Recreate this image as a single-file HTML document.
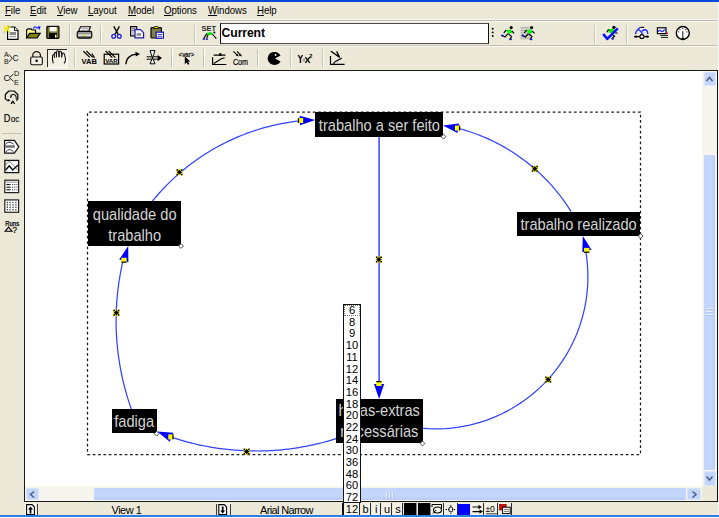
<!DOCTYPE html>
<html><head><meta charset="utf-8">
<style>
*{margin:0;padding:0;box-sizing:border-box}
html,body{width:719px;height:518px;overflow:hidden;background:#ECE9D8;font-family:"Liberation Sans",sans-serif;position:relative}
.a{position:absolute}
.menu{position:absolute;top:4px;font-size:11px;color:#000;white-space:nowrap;letter-spacing:-0.1px;line-height:13px;transform:scaleX(0.88);transform-origin:0 0}
.menu u{text-decoration:underline}
.sep{position:absolute;background:#C5C2B2;border-right:1px solid #fff;width:2px}
svg{position:absolute;overflow:visible}
.st{position:absolute;font-size:10.5px;color:#000;white-space:nowrap;letter-spacing:-0.2px}
.nb{position:absolute;background:#000}
.nt{position:absolute;color:#D4D4D4;white-space:nowrap;text-align:center}
.nt span{display:inline-block;transform-origin:center}
.fl{position:absolute;text-align:center;color:#000}
</style></head><body>

<div class="a" style="left:0;top:0;width:719px;height:2px;background:#0A49D6"></div>
<div class="menu" style="left:5px"><u>F</u>ile</div>
<div class="menu" style="left:30px"><u>E</u>dit</div>
<div class="menu" style="left:57px"><u>V</u>iew</div>
<div class="menu" style="left:87.5px"><u>L</u>ayout</div>
<div class="menu" style="left:127.5px"><u>M</u>odel</div>
<div class="menu" style="left:163.5px"><u>O</u>ptions</div>
<div class="menu" style="left:208px"><u>W</u>indows</div>
<div class="menu" style="left:257px"><u>H</u>elp</div>
<div class="a" style="left:0;top:19px;width:719px;height:1px;background:#F7F6F0"></div>
<div class="a" style="left:0;top:20px;width:719px;height:1px;background:#BDBAAC"></div>
<div class="a" style="left:0;top:21px;width:719px;height:1px;background:#F8F7F2"></div>
<div class="a" style="left:0;top:45px;width:719px;height:1px;background:#C5C2B2"></div>
<div class="a" style="left:0;top:46px;width:719px;height:1px;background:#F8F7F2"></div>
<div class="a" style="left:718px;top:2px;width:1px;height:515px;background:#F6F6F2"></div>
<div class="sep" style="left:69px;top:25px;height:18px"></div>
<div class="sep" style="left:100px;top:25px;height:18px"></div>
<div class="sep" style="left:194px;top:25px;height:18px"></div>
<div class="sep" style="left:594px;top:25px;height:18px"></div>
<div class="sep" style="left:626px;top:25px;height:18px"></div>
<div class="sep" style="left:74px;top:49px;height:18px"></div>
<div class="sep" style="left:171px;top:49px;height:18px"></div>
<div class="sep" style="left:203px;top:49px;height:18px"></div>
<div class="sep" style="left:257px;top:49px;height:18px"></div>
<div class="sep" style="left:290px;top:49px;height:18px"></div>
<div class="sep" style="left:322px;top:49px;height:18px"></div>
<div class="a" style="left:219.5px;top:22.8px;width:269.5px;height:21px;background:#fff;border:1.8px solid #4a4a4a;border-right:1.2px solid #111;border-left:1.2px solid #111"></div>
<div class="a" style="left:221.6px;top:25.6px;font-size:12.2px;font-weight:bold;color:#000;line-height:15px;letter-spacing:-0.1px">Current</div>
<div class="a" style="left:47.2px;top:48.8px;width:20.2px;height:18.6px;border-top:1.3px solid #2a2a2a;border-left:1.4px solid #2a2a2a;background:#F3F1E6;box-shadow:1px 1px 0 #fff"></div>
<div class="a" style="left:2px;top:132.5px;width:20px;height:1px;background:#C5C2B2"></div>
<div class="a" style="left:23.7px;top:69.8px;width:694.3px;height:432.5px;border:1.3px solid #1a1a1a;border-bottom:1.5px solid #1a1a1a;border-right:1.2px solid #111;background:#fff"></div>
<div class="a" style="left:702px;top:71px;width:15px;height:416px;background:#F7F6EE"></div>
<div class="a" style="left:703.5px;top:72px;width:12px;height:14px;background:#C4D5FC;border-radius:2px;box-shadow:inset 0 0 0 1px #D8E4FD"></div>
<div class="a" style="left:704px;top:155px;width:11px;height:315px;background:linear-gradient(90deg,#C3D4FC 0%,#C6D7FC 70%,#B8CBF8 100%);border-radius:1.5px"></div>
<div class="a" style="left:703.5px;top:471px;width:12px;height:15px;background:#C4D5FC;border-radius:2px;box-shadow:inset 0 0 0 1px #D8E4FD"></div>
<div class="a" style="left:25px;top:486px;width:677px;height:15px;background:#F7F6EE"></div>
<div class="a" style="left:26px;top:488px;width:13px;height:12px;background:#C4D5FC;border-radius:2px;box-shadow:inset 0 0 0 1px #D8E4FD"></div>
<div class="a" style="left:94px;top:488px;width:591.5px;height:11.5px;background:linear-gradient(180deg,#C3D4FC 0%,#C6D7FC 65%,#B8CBF8 100%);border-radius:1.5px"></div>
<div class="a" style="left:687px;top:488px;width:14px;height:12px;background:#C4D5FC;border-radius:2px;box-shadow:inset 0 0 0 1px #D8E4FD"></div>
<div class="a" style="left:702px;top:486px;width:15px;height:15px;background:#ECE9D8"></div>
<svg class="a" style="left:0;top:0" width="719" height="518"><path d="M706.5,81 L709.5,77.5 L712.5,81" fill="none" stroke="#4D6185" stroke-width="1.6"/><path d="M706.5,476.5 L709.5,480 L712.5,476.5" fill="none" stroke="#4D6185" stroke-width="1.6"/><path d="M34,491.5 L30.5,494.5 L34,497.5" fill="none" stroke="#4D6185" stroke-width="1.6"/><path d="M692.5,491.5 L696,494.5 L692.5,497.5" fill="none" stroke="#4D6185" stroke-width="1.6"/><path d="M386.5,491 L386.5,498 M389.5,491 L389.5,498 M392.5,491 L392.5,498" stroke="#E8EEFE" stroke-width="1"/><path d="M387.5,491.5 L387.5,498.5 M390.5,491.5 L390.5,498.5 M393.5,491.5 L393.5,498.5" stroke="#A9BEF2" stroke-width="0.8"/><path d="M706,308.5 L713,308.5 M706,311.5 L713,311.5 M706,314.5 L713,314.5" stroke="#E8EEFE" stroke-width="1"/><path d="M706.5,309.5 L713.5,309.5 M706.5,312.5 L713.5,312.5 M706.5,315.5 L713.5,315.5" stroke="#A9BEF2" stroke-width="0.8"/></svg>
<svg class="a" style="left:0;top:0" width="719" height="518"><rect x="87.5" y="112" width="553" height="342.5" fill="none" stroke="#1e1e1e" stroke-width="1.25" stroke-dasharray="2.75 2.58" stroke-dashoffset="3.9"/><path d="M152.31,201.24 L154.60,198.46 L156.94,195.72 L159.32,193.01 L161.75,190.34 L164.21,187.72 L166.73,185.13 L169.28,182.58 L171.88,180.08 L174.51,177.62 L177.19,175.20 L179.90,172.83 L182.65,170.50 L185.45,168.22 L188.27,165.99 L191.14,163.80 L194.04,161.65 L196.97,159.56 L199.94,157.51 L202.94,155.51 L205.98,153.57 L209.04,151.67 L212.14,149.82 L215.26,148.02 L218.42,146.28 L221.60,144.58 L224.81,142.94 L228.05,141.35 L231.31,139.82 L234.60,138.34 L237.91,136.91 L241.24,135.53 L244.59,134.22 L247.97,132.95 L251.37,131.74 L254.78,130.59 L258.22,129.49 L261.67,128.45 L265.14,127.47 L268.62,126.54 L272.12,125.67 L275.64,124.86 L279.16,124.11 L282.70,123.41 L286.25,122.77 L289.81,122.19 L293.37,121.67 L296.95,121.21 L300.53,120.80" fill="none" stroke="#3344ff" stroke-width="1.25"/><polygon points="315.30,120.00 299.99,125.37 299.63,115.78" fill="#0000ff"/><rect x="297.86" y="118.05" width="5.3" height="5" fill="#ffff00"/><rect x="297.86" y="118.05" width="1.3" height="5" fill="#111"/><g transform="translate(179.5,172.3)"><rect x="-3" y="-3" width="6" height="6" fill="#e8e000"/><rect x="-1.8" y="-1.8" width="3.6" height="3.6" fill="#000" transform="rotate(45)"/><rect x="-3" y="-3" width="1.5" height="1.5" fill="#000"/><rect x="1.5" y="-3" width="1.5" height="1.5" fill="#000"/><rect x="-3" y="1.5" width="1.5" height="1.5" fill="#000"/><rect x="1.5" y="1.5" width="1.5" height="1.5" fill="#000"/></g><path d="M571.14,211.62 L569.53,209.08 L567.89,206.56 L566.20,204.07 L564.48,201.60 L562.71,199.16 L560.91,196.75 L559.07,194.37 L557.19,192.02 L555.27,189.70 L553.32,187.41 L551.33,185.15 L549.31,182.93 L547.24,180.73 L545.15,178.57 L543.02,176.44 L540.86,174.35 L538.66,172.29 L536.44,170.27 L534.18,168.28 L531.88,166.33 L529.56,164.42 L527.21,162.54 L524.83,160.70 L522.42,158.90 L519.98,157.14 L517.51,155.41 L515.02,153.73 L512.50,152.08 L509.95,150.48 L507.38,148.92 L504.78,147.40 L502.16,145.91 L499.52,144.48 L496.85,143.08 L494.16,141.73 L491.45,140.42 L488.73,139.15 L485.98,137.92 L483.21,136.74 L480.42,135.61 L477.62,134.52 L474.79,133.47 L471.96,132.47 L469.10,131.51 L466.23,130.60 L463.35,129.74 L460.45,128.92 L457.55,128.15" fill="none" stroke="#3344ff" stroke-width="1.25"/><polygon points="443.00,125.50 459.10,123.44 457.44,132.90" fill="#0000ff"/><rect x="454.93" y="125.55" width="5.3" height="5" fill="#ffff00"/><rect x="458.93" y="125.55" width="1.3" height="5" fill="#111"/><g transform="translate(534.8,168.8)"><rect x="-3" y="-3" width="6" height="6" fill="#e8e000"/><rect x="-1.8" y="-1.8" width="3.6" height="3.6" fill="#000" transform="rotate(45)"/><rect x="-3" y="-3" width="1.5" height="1.5" fill="#000"/><rect x="1.5" y="-3" width="1.5" height="1.5" fill="#000"/><rect x="-3" y="1.5" width="1.5" height="1.5" fill="#000"/><rect x="1.5" y="1.5" width="1.5" height="1.5" fill="#000"/></g><path d="M422.46,428.32 L428.25,428.72 L434.05,428.89 L439.85,428.84 L445.65,428.57 L451.43,428.09 L457.19,427.38 L462.91,426.45 L468.60,425.30 L474.24,423.94 L479.82,422.36 L485.34,420.58 L490.79,418.58 L496.16,416.38 L501.44,413.97 L506.62,411.36 L511.71,408.56 L516.68,405.57 L521.53,402.39 L526.26,399.03 L530.85,395.49 L535.31,391.77 L539.63,387.89 L543.79,383.85 L547.79,379.65 L551.64,375.31 L555.31,370.82 L558.81,366.19 L562.13,361.43 L565.27,356.55 L568.22,351.55 L570.98,346.45 L573.54,341.24 L575.90,335.94 L578.05,330.56 L580.00,325.09 L581.74,319.56 L583.27,313.96 L584.58,308.31 L585.68,302.61 L586.56,296.87 L587.22,291.11 L587.66,285.32 L587.87,279.53 L587.87,273.72 L587.65,267.93 L587.20,262.14 L586.54,256.38 L585.65,250.64" fill="none" stroke="#3344ff" stroke-width="1.25"/><polygon points="582.80,236.10 591.55,249.76 582.30,252.32" fill="#0000ff"/><rect x="584.09" y="247.87" width="5.3" height="5" fill="#ffff00"/><rect x="584.09" y="251.57" width="5.3" height="1.3" fill="#111"/><g transform="translate(548.2,379.6)"><rect x="-3" y="-3" width="6" height="6" fill="#e8e000"/><rect x="-1.8" y="-1.8" width="3.6" height="3.6" fill="#000" transform="rotate(45)"/><rect x="-3" y="-3" width="1.5" height="1.5" fill="#000"/><rect x="1.5" y="-3" width="1.5" height="1.5" fill="#000"/><rect x="-3" y="1.5" width="1.5" height="1.5" fill="#000"/><rect x="1.5" y="1.5" width="1.5" height="1.5" fill="#000"/></g><path d="M336.31,438.62 L332.96,439.66 L329.60,440.65 L326.23,441.59 L322.84,442.49 L319.44,443.35 L316.03,444.16 L312.62,444.93 L309.19,445.65 L305.75,446.33 L302.30,446.96 L298.85,447.54 L295.38,448.08 L291.91,448.58 L288.44,449.03 L284.96,449.43 L281.47,449.79 L277.98,450.10 L274.49,450.36 L270.99,450.58 L267.49,450.76 L263.99,450.88 L260.48,450.96 L256.98,451.00 L253.47,450.99 L249.97,450.93 L246.47,450.83 L242.97,450.68 L239.47,450.48 L235.97,450.24 L232.48,449.95 L228.99,449.62 L225.51,449.24 L222.03,448.81 L218.56,448.34 L215.09,447.82 L211.63,447.26 L208.18,446.65 L204.74,446.00 L201.30,445.30 L197.88,444.55 L194.46,443.76 L191.06,442.93 L187.67,442.05 L184.29,441.13 L180.92,440.16 L177.56,439.15 L174.22,438.09 L170.90,436.99" fill="none" stroke="#3344ff" stroke-width="1.25"/><polygon points="157.20,431.40 173.37,432.72 169.80,441.63" fill="#0000ff"/><rect x="168.29" y="434.41" width="5.3" height="5" fill="#ffff00"/><rect x="172.29" y="434.41" width="1.3" height="5" fill="#111"/><g transform="translate(246.6,451.6)"><rect x="-3" y="-3" width="6" height="6" fill="#e8e000"/><rect x="-1.8" y="-1.8" width="3.6" height="3.6" fill="#000" transform="rotate(45)"/><rect x="-3" y="-3" width="1.5" height="1.5" fill="#000"/><rect x="1.5" y="-3" width="1.5" height="1.5" fill="#000"/><rect x="-3" y="1.5" width="1.5" height="1.5" fill="#000"/><rect x="1.5" y="1.5" width="1.5" height="1.5" fill="#000"/></g><path d="M131.34,409.06 L130.30,406.08 L129.30,403.09 L128.33,400.09 L127.40,397.08 L126.50,394.06 L125.64,391.03 L124.82,387.98 L124.03,384.93 L123.28,381.87 L122.57,378.80 L121.89,375.72 L121.25,372.63 L120.65,369.54 L120.09,366.44 L119.56,363.33 L119.07,360.22 L118.61,357.10 L118.20,353.97 L117.82,350.84 L117.48,347.71 L117.18,344.57 L116.91,341.43 L116.68,338.29 L116.49,335.14 L116.34,331.99 L116.22,328.84 L116.15,325.69 L116.11,322.54 L116.10,319.39 L116.14,316.23 L116.21,313.08 L116.32,309.93 L116.47,306.78 L116.66,303.64 L116.88,300.49 L117.15,297.35 L117.45,294.21 L117.78,291.08 L118.16,287.95 L118.57,284.83 L119.02,281.71 L119.51,278.59 L120.03,275.48 L120.59,272.38 L121.19,269.29 L121.83,266.20 L122.50,263.12 L123.21,260.05" fill="none" stroke="#3344ff" stroke-width="1.25"/><polygon points="128.20,246.10 128.38,262.33 119.18,259.59" fill="#0000ff"/><rect x="121.33" y="257.79" width="5.3" height="5" fill="#ffff00"/><rect x="121.33" y="261.49" width="5.3" height="1.3" fill="#111"/><g transform="translate(116.4,312.7)"><rect x="-3" y="-3" width="6" height="6" fill="#e8e000"/><rect x="-1.8" y="-1.8" width="3.6" height="3.6" fill="#000" transform="rotate(45)"/><rect x="-3" y="-3" width="1.5" height="1.5" fill="#000"/><rect x="1.5" y="-3" width="1.5" height="1.5" fill="#000"/><rect x="-3" y="1.5" width="1.5" height="1.5" fill="#000"/><rect x="1.5" y="1.5" width="1.5" height="1.5" fill="#000"/></g><path d="M379.1,136.5 L379.1,384" fill="none" stroke="#3344ff" stroke-width="1.5"/><polygon points="379.1,399 374,384 384.2,384" fill="#0000ff"/><rect x="376.25" y="381.00" width="5.3" height="5" fill="#ffff00"/><rect x="376.25" y="381.00" width="5.3" height="1.3" fill="#111"/><g transform="translate(378.9,259.5)"><rect x="-3" y="-3" width="6" height="6" fill="#e8e000"/><rect x="-1.8" y="-1.8" width="3.6" height="3.6" fill="#000" transform="rotate(45)"/><rect x="-3" y="-3" width="1.5" height="1.5" fill="#000"/><rect x="1.5" y="-3" width="1.5" height="1.5" fill="#000"/><rect x="-3" y="1.5" width="1.5" height="1.5" fill="#000"/><rect x="1.5" y="1.5" width="1.5" height="1.5" fill="#000"/></g></svg>
<div class="nb" style="left:315px;top:112px;width:128px;height:24.5px"></div>
<div class="nt" style="left:229.00px;top:115.56px;width:300px;font-size:17px;line-height:20.7px"><span style="transform:scaleX(0.86)">trabalho a ser feito</span></div>
<div class="nb" style="left:87.5px;top:201px;width:93.8px;height:44.6px"></div>
<div class="nt" style="left:-15.60px;top:204.56px;width:300px;font-size:17px;line-height:20.7px"><span style="transform:scaleX(0.86)">qualidade do</span></div>
<div class="nt" style="left:-15.60px;top:225.66px;width:300px;font-size:17px;line-height:20.7px"><span style="transform:scaleX(0.86)">trabalho</span></div>
<div class="nb" style="left:517px;top:212.3px;width:123.3px;height:23.5px"></div>
<div class="nt" style="left:428.65px;top:214.56px;width:300px;font-size:17px;line-height:20.7px"><span style="transform:scaleX(0.86)">trabalho realizado</span></div>
<div class="nb" style="left:336px;top:398.7px;width:86.8px;height:44.4px"></div>
<div class="nt" style="left:229.40px;top:401.06px;width:300px;font-size:17px;line-height:20.7px"><span style="transform:scaleX(0.86)">horas-extras</span></div>
<div class="nt" style="left:229.40px;top:421.96px;width:300px;font-size:17px;line-height:20.7px"><span style="transform:scaleX(0.86)">necessárias</span></div>
<div class="nb" style="left:112.2px;top:409.3px;width:44.6px;height:24.2px"></div>
<div class="nt" style="left:-15.50px;top:412.16px;width:300px;font-size:17px;line-height:20.7px"><span style="transform:scaleX(0.86)">fadiga</span></div>
<svg class="a" style="left:0;top:0" width="719" height="518"><rect x="-1.7" y="-1.7" width="3.4" height="3.4" transform="translate(443.5,136.7) rotate(45)" fill="#fff" stroke="#444" stroke-width="0.9"/><rect x="-1.7" y="-1.7" width="3.4" height="3.4" transform="translate(181,246) rotate(45)" fill="#fff" stroke="#444" stroke-width="0.9"/><rect x="-1.7" y="-1.7" width="3.4" height="3.4" transform="translate(640.7,236) rotate(45)" fill="#fff" stroke="#444" stroke-width="0.9"/><rect x="-1.7" y="-1.7" width="3.4" height="3.4" transform="translate(422.5,443.5) rotate(45)" fill="#fff" stroke="#444" stroke-width="0.9"/><rect x="-1.7" y="-1.7" width="3.4" height="3.4" transform="translate(156.7,433.7) rotate(45)" fill="#fff" stroke="#444" stroke-width="0.9"/></svg>
<div class="a" style="left:343px;top:303.5px;width:18px;height:199px;background:#fff;border:1px solid #111;border-bottom:1.5px solid #111"></div>
<div class="fl" style="left:344px;top:304.10px;width:16px;font-size:11.2px;line-height:12px">6</div>
<div class="fl" style="left:344px;top:315.78px;width:16px;font-size:11.2px;line-height:12px">8</div>
<div class="fl" style="left:344px;top:327.46px;width:16px;font-size:11.2px;line-height:12px">9</div>
<div class="fl" style="left:344px;top:339.14px;width:16px;font-size:11.2px;line-height:12px">10</div>
<div class="fl" style="left:344px;top:350.82px;width:16px;font-size:11.2px;line-height:12px">11</div>
<div class="fl" style="left:344px;top:362.50px;width:16px;font-size:11.2px;line-height:12px">12</div>
<div class="fl" style="left:344px;top:374.18px;width:16px;font-size:11.2px;line-height:12px">14</div>
<div class="fl" style="left:344px;top:385.86px;width:16px;font-size:11.2px;line-height:12px">16</div>
<div class="fl" style="left:344px;top:397.54px;width:16px;font-size:11.2px;line-height:12px">18</div>
<div class="fl" style="left:344px;top:409.22px;width:16px;font-size:11.2px;line-height:12px">20</div>
<div class="fl" style="left:344px;top:420.90px;width:16px;font-size:11.2px;line-height:12px">22</div>
<div class="fl" style="left:344px;top:432.58px;width:16px;font-size:11.2px;line-height:12px">24</div>
<div class="fl" style="left:344px;top:444.26px;width:16px;font-size:11.2px;line-height:12px">30</div>
<div class="fl" style="left:344px;top:455.94px;width:16px;font-size:11.2px;line-height:12px">36</div>
<div class="fl" style="left:344px;top:467.62px;width:16px;font-size:11.2px;line-height:12px">48</div>
<div class="fl" style="left:344px;top:479.30px;width:16px;font-size:11.2px;line-height:12px">60</div>
<div class="fl" style="left:344px;top:490.98px;width:16px;font-size:11.2px;line-height:12px">72</div>
<div class="a" style="left:344.2px;top:304.8px;width:15.6px;height:10.8px;border:1px dotted #777"></div>
<svg class="a" style="left:0;top:0" width="719" height="518"><path d="M7.6,27 L14.6,27 L18,30.4 L18,39.4 L7.6,39.4 Z" fill="#fff" stroke="#000" stroke-width="1.2"/><path d="M14.4,27 L14.4,30.6 L18,30.6" fill="#e0e0e0" stroke="#000" stroke-width="0.9"/><rect x="9.6" y="32" width="6.4" height="3.2" fill="#8a8a8a"/><rect x="9.6" y="36.2" width="6.4" height="1" fill="#8a8a8a"/><path d="M4,26.5 L10,32.5 M10.5,26 L4.5,32 M7.3,25 L7.3,29.5 M3.5,29 L8,29" stroke="#f0f000" stroke-width="1.2"/><rect x="4" y="31.5" width="1.2" height="1.2" fill="#aaa"/><path d="M26.6,38 L26.6,30 L28,28.8 L31,28.8 L32,30 L35.5,30 L35.5,33.5" fill="#ffff80" stroke="#000" stroke-width="1.2"/><path d="M26.6,38 L29.6,33.4 L40.2,33.4 L37,38 Z" fill="#808000" stroke="#000" stroke-width="1.2"/><path d="M33.2,28.6 Q34.6,26 36.2,27.4 Q37.4,28.4 38.6,27.4" fill="none" stroke="#2030ff" stroke-width="1.3"/><path d="M37.6,26.2 L40.6,26.6 L39.6,30 Z" fill="#0010ff"/><rect x="46.8" y="26.3" width="12.2" height="12.2" rx="0.5" fill="#111" stroke="#000" stroke-width="1"/><rect x="47.6" y="27.2" width="1.3" height="10.6" fill="#8a8a00"/><rect x="57" y="27.2" width="1.3" height="10.6" fill="#8a8a00"/><rect x="49.4" y="27" width="7.4" height="4.6" fill="#fff"/><rect x="49.4" y="31.6" width="7.4" height="1" fill="#bdbd60"/><rect x="49.6" y="34" width="7" height="4.3" fill="#000"/><rect x="55" y="34.8" width="1.5" height="2.8" fill="#fff"/><path d="M80.5,26.8 L90.5,26.8 L88.5,31.6 L78.5,31.6 Z" fill="#fff" stroke="#000" stroke-width="1.1"/><path d="M81.3,28.6 L88.8,28.6 M80.6,30.2 L88.2,30.2" stroke="#777" stroke-width="0.6"/><rect x="77.2" y="31.4" width="14.6" height="6.8" rx="1.6" fill="#9a9a9a" stroke="#000" stroke-width="1.1"/><rect x="78.2" y="34.6" width="12.6" height="1.2" fill="#fff"/><rect x="83.6" y="34.6" width="2.6" height="1.2" fill="#e0e000"/><rect x="78.2" y="36.6" width="12.6" height="1.5" fill="#3a3a3a"/><path d="M113.8,26.4 L118.2,34.4 M119.4,26.4 L115,34.4" stroke="#000" stroke-width="1.3"/><ellipse cx="113.7" cy="36.3" rx="1.9" ry="1.9" fill="none" stroke="#1a1ad0" stroke-width="1.3"/><ellipse cx="119.3" cy="36.3" rx="1.9" ry="1.9" fill="none" stroke="#1a1ad0" stroke-width="1.3"/><rect x="130.6" y="26.6" width="6.2" height="9.4" fill="#c8c8c8" stroke="#000" stroke-width="1.1"/><path d="M132,28.5 L135,28.5 M132,30.5 L135,30.5" stroke="#555" stroke-width="0.7"/><path d="M135,29.6 L140.5,29.6 L143.6,32.7 L143.6,37.8 L135,37.8 Z" fill="#fff" stroke="#1a1ab0" stroke-width="1.2"/><rect x="136.6" y="33" width="4.5" height="3.2" fill="#9a9a9a"/><rect x="151" y="27.6" width="10.4" height="10.4" rx="0.8" fill="#808048" stroke="#000" stroke-width="1.2"/><path d="M153.6,28.6 L154.6,26.5 L157.8,26.5 L158.8,28.6 Z" fill="#e8e800" stroke="#000" stroke-width="0.8"/><rect x="156.2" y="32.2" width="7.2" height="6" fill="#fff" stroke="#1a1ab0" stroke-width="1.2"/><path d="M157.6,34.5 L162,34.5 M157.6,36.3 L162,36.3" stroke="#1a1ab0" stroke-width="0.8"/><text x="201.5" y="31.2" font-family="Liberation Sans" font-size="6.6" font-weight="bold" fill="#2a2a2a" textLength="14.6" lengthAdjust="spacingAndGlyphs">SET</text><path d="M206.5,33 L211.5,32 L213,34.4 L208,35.2 Z" fill="#00e000"/><circle cx="214.4" cy="32.4" r="1" fill="#000"/><path d="M207,33.6 L204.6,36.8 L203.8,39 M208,35 L206.5,38.5 M212.3,34 L216.3,38.7" stroke="#000" stroke-width="1.1" fill="none"/><rect x="202.6" y="38.4" width="2.4" height="1.3" fill="#1010c0"/><rect x="205.8" y="38.6" width="2.3" height="1.2" fill="#1010c0"/><circle cx="492.7" cy="28.8" r="0.95" fill="#000"/><circle cx="492.7" cy="32.4" r="0.95" fill="#000"/><circle cx="492.7" cy="36" r="0.95" fill="#000"/><g transform="translate(0,0)"><path d="M506.2,30 L510.8,29.4 L512.6,32.6 L508.3,33.8 Z" fill="#00ff00"/><circle cx="511.2" cy="27.6" r="1.6" fill="#000"/><path d="M506.3,30 L503.8,32.8 M511.8,31 L514.2,33.4 M508,33.6 L505,37 L502.6,35.8 M508.6,33.8 L511.6,36.6 L509.8,39.4" stroke="#000" stroke-width="1.15" fill="none"/><ellipse cx="502.3" cy="35.5" rx="1.3" ry="0.9" fill="#1010c0"/><ellipse cx="510.6" cy="39.4" rx="1.4" ry="0.8" fill="#1010c0"/></g><rect x="520.5" y="26.80" width="9" height="0.9" fill="#a8a8a8"/><rect x="520.5" y="28.45" width="11" height="0.9" fill="#a8a8a8"/><rect x="520.5" y="30.10" width="11" height="0.9" fill="#a8a8a8"/><rect x="520.5" y="31.75" width="11" height="0.9" fill="#a8a8a8"/><rect x="520.5" y="33.40" width="11" height="0.9" fill="#a8a8a8"/><rect x="520.5" y="35.05" width="11" height="0.9" fill="#a8a8a8"/><rect x="520.5" y="36.70" width="11" height="0.9" fill="#a8a8a8"/><rect x="520.5" y="38.35" width="9" height="0.9" fill="#a8a8a8"/><g transform="translate(20.4,0)"><path d="M506.2,30 L510.8,29.4 L512.6,32.6 L508.3,33.8 Z" fill="#00ff00"/><circle cx="511.2" cy="27.6" r="1.6" fill="#000"/><path d="M506.3,30 L503.8,32.8 M511.8,31 L514.2,33.4 M508,33.6 L505,37 L502.6,35.8 M508.6,33.8 L511.6,36.6 L509.8,39.4" stroke="#000" stroke-width="1.15" fill="none"/><ellipse cx="502.3" cy="35.5" rx="1.3" ry="0.9" fill="#1010c0"/><ellipse cx="510.6" cy="39.4" rx="1.4" ry="0.8" fill="#1010c0"/></g><path d="M608.6,29 L614.2,28.8 L613.6,32.8 L608.8,32.8 Z" fill="#00e000"/><circle cx="613.9" cy="27.3" r="1.6" fill="#000"/><path d="M608.6,29.4 L606.8,32.2 M611.8,34 L614.6,36.2 L611.8,38.6 M615.3,33 L617.4,33" stroke="#000" stroke-width="1.2" fill="none"/><path d="M615.3,33 L617.4,33" stroke="#555" stroke-width="1"/><ellipse cx="612.7" cy="38.8" rx="1.3" ry="0.9" fill="#1010c0"/><path d="M603.2,34 L607.3,38.8 L617.8,28.4" fill="none" stroke="#0010ff" stroke-width="2.6" stroke-linejoin="round"/><path d="M635.6,34.2 C635.2,32 637.5,29.6 640.4,27.3 M638.3,29.9 C640,30.2 641.6,32 642.4,34 M642,31.4 C643.2,29.6 645.6,29.2 646.8,30.6 C647.8,31.6 647.8,33 647.6,34" fill="none" stroke="#1a2aff" stroke-width="1.4"/><path d="M640.4,27.3 L644.2,27.3" stroke="#000" stroke-width="1.1"/><path d="M634,36.6 L639.4,36.6 M644.2,36.6 L649,36.6" stroke="#000" stroke-width="1.2"/><path d="M639.6,36.6 L640.6,34.9 L643.2,34.9 L644.2,36.6 L643.2,38.4 L640.6,38.4 Z" fill="#fff" stroke="#000" stroke-width="1.2"/><path d="M635.6,35 L637.8,36.6 L635.6,38.2 Z M646.6,35 L649,36.6 L646.6,38.2 Z" fill="#000"/><rect x="657.4" y="27.8" width="8.6" height="5.8" fill="#fff" stroke="#000" stroke-width="1.2"/><path d="M658.2,31.8 Q659.5,29.4 661,31 Q662.5,32.4 664,30.2 L665.4,29.8" fill="none" stroke="#1a2aff" stroke-width="1.3"/><circle cx="667" cy="33.2" r="0.9" fill="#e00000"/><path d="M660.2,35.4 L668,35.4 M661,37.4 L668,37.4" stroke="#000" stroke-width="0.9"/><circle cx="682.8" cy="33" r="6.5" fill="#fff" stroke="#000" stroke-width="1.4"/><path d="M682.8,28 L682.8,29.2 M679.6,29 L680.1,30 M686,29 L685.5,30 M678.2,31.8 L679.2,32 M687.4,31.8 L686.4,32 M682.8,31.2 L682.8,37" stroke="#000" stroke-width="0.9"/><path d="M680.8,39.4 L682.8,36.8 L684.8,39.4 Z" fill="#000"/><text x="3.9" y="57" font-family="Liberation Sans" font-size="7" font-weight="normal" fill="#111" >A</text><text x="3.9" y="64.2" font-family="Liberation Sans" font-size="7" font-weight="normal" fill="#111" >B</text><path d="M8.8,54.4 L12.2,58.2 L8.8,62" fill="none" stroke="#111" stroke-width="0.9"/><text x="12.4" y="61" font-family="Liberation Sans" font-size="8.4" font-weight="normal" fill="#111" >C</text><path d="M32.8,57.2 L32.8,55.3 A3.8,3.6 0 0 1 40.4,55.3 L40.4,57.2" fill="none" stroke="#111" stroke-width="1.2"/><rect x="30.7" y="57" width="11.6" height="7.7" rx="1.2" fill="#F4F2EA" stroke="#111" stroke-width="1.1"/><rect x="35.5" y="59.6" width="2.2" height="2.4" fill="#000"/><path d="M53.3,63.4 C52.6,61 52.2,58.4 52.5,56 C52.7,54.6 53.8,54.2 54.3,55.2 M54.3,58 L54.3,53.4 C54.4,52 56.2,52 56.3,53.4 L56.4,57.4 M56.4,57 L56.6,51.8 C56.7,50.4 58.6,50.4 58.7,51.8 L58.8,57.2 M59.2,57 L59.4,52.2 C59.5,50.9 61.4,50.9 61.5,52.2 L61.6,57.4 M61.8,57 L62.2,53.8 C62.5,52.6 64.2,52.7 64.3,53.9 C64.8,56.2 65.7,58.4 65.5,60.4 C65.3,61.7 64.6,62.6 64,63.4" fill="none" stroke="#111" stroke-width="1.05"/><text x="81.6" y="64.3" font-family="Liberation Sans" font-size="6.6" font-weight="bold" fill="#000" textLength="15.4" lengthAdjust="spacingAndGlyphs">VAB</text><path d="M83.4,51.3 L89.8,57.4 M86.4,51 L92.8,57.4 M91.8,53.5 L94.6,57.8" stroke="#000" stroke-width="1.2"/><rect x="104.2" y="54.2" width="14.4" height="9.8" fill="none" stroke="#000" stroke-width="1.2"/><text x="105.2" y="63" font-family="Liberation Sans" font-size="6.2" font-weight="bold" fill="#000" textLength="12.6" lengthAdjust="spacingAndGlyphs">VAR</text><path d="M105.6,51 L112.4,57.6 M108.6,51 L115.4,57.6" stroke="#000" stroke-width="1.2"/><path d="M125.8,64.2 C126.2,59 129.5,55 136.4,54.2" fill="none" stroke="#000" stroke-width="1.3"/><path d="M135.4,51.8 L140,54 L135.8,56.6 Z" fill="#000"/><path d="M146.6,56.8 L158,56.8 M146.6,59.2 L158,59.2" stroke="#000" stroke-width="1"/><path d="M150,50.6 L155,50.6 L152.5,58 Z M150,63.8 L155,63.8 L152.5,58 Z" fill="#fff" stroke="#000" stroke-width="1"/><path d="M157.6,55 L162,58 L157.6,61.2 Z" fill="#000"/><text x="178.8" y="56.6" font-family="Liberation Sans" font-size="6.4" font-weight="bold" fill="#000" textLength="15.4" lengthAdjust="spacingAndGlyphs">&lt;var&gt;</text><path d="M184.8,56.4 L184.8,64.2 L186.5,62.4 L188,64.8 L189.4,64.1 L188,61.8 L190.2,61.6 Z" fill="#000"/><path d="M212.6,57.2 L212.6,64.5 L226.4,64.5 M213.6,55.2 L225.4,55.2 M213.8,63.4 L221.4,58.8 L224.6,57.8" fill="none" stroke="#000" stroke-width="1.2"/><rect x="219.2" y="53.2" width="2.2" height="2.8" fill="#000"/><text x="232.9" y="65" font-family="Liberation Sans" font-size="9.2" font-weight="normal" fill="#000" stroke="#000" stroke-width="0.2" textLength="15.2" lengthAdjust="spacingAndGlyphs">Com</text><path d="M233.4,51.3 L238,55.8 M237,51.3 L241.4,55.8" stroke="#000" stroke-width="1.1"/><path d="M237.2,53.6 L238.8,56.4 L235.8,55.6 Z M240.2,53.6 L241.8,56.4 L238.8,55.6 Z" fill="#000"/><path d="M280.6,55.4 A6.9,6.5 0 1 0 280.6,61.4 L275,58.6 Z" fill="#000"/><circle cx="275.6" cy="55" r="0.9" fill="#fff"/><path d="M298.3,55 L300.4,58.6 L302.5,55 M300.4,58.6 L300.4,62.9" fill="none" stroke="#111" stroke-width="1.4"/><path d="M302.6,59.3 L305,59.3 M302.6,61 L305,61" stroke="#777" stroke-width="0.9"/><path d="M305.3,57.2 L309.8,62.9 M309.8,57.2 L305.3,62.9" stroke="#111" stroke-width="1.4"/><text x="309" y="57.8" font-family="Liberation Sans" font-size="6.2" font-weight="bold" fill="#000" >2</text><path d="M330.5,56.1 L330.5,64.4 L344.6,64.4 M333.6,63.8 C333.8,61.8 335.6,61.4 337.2,60.6 C338.8,59.8 340,59.2 341.8,58" fill="none" stroke="#000" stroke-width="1.2"/><path d="M330.9,51.3 L339.8,57.4 M336.6,51.4 L339.4,56.8" stroke="#000" stroke-width="1.3"/><text x="3.4" y="81.2" font-family="Liberation Sans" font-size="9.2" font-weight="normal" fill="#111" >C</text><path d="M13.6,74 L9.4,77.7 L13.6,81.4" fill="none" stroke="#111" stroke-width="0.9"/><text x="14" y="76.4" font-family="Liberation Sans" font-size="7.4" font-weight="normal" fill="#111" >D</text><text x="14" y="85" font-family="Liberation Sans" font-size="7.4" font-weight="normal" fill="#111" >E</text><path d="M8.8,91 L14.2,91 L17.8,94.6 L17.8,99 L16.2,100.6 M7.8,100.6 L5.3,98.6 L5.3,94.6 L8.8,91" fill="none" stroke="#000" stroke-width="1.2"/><path d="M10.6,97.8 C11,95 12.4,94.2 13.6,94.4 C15.2,94.8 16.4,96.8 16.2,99" fill="none" stroke="#222" stroke-width="1.1"/><path d="M10.6,93.8 L11.6,96.8 L10.6,98 Z" fill="#000"/><path d="M7.6,100 L8.8,99 L10.2,100.8 L7.6,101.4 Z" fill="#000"/><path d="M11,103.8 L12.8,101.4 L14.6,103.8" fill="none" stroke="#000" stroke-width="1.3"/><text x="3.8" y="122" font-family="Liberation Sans" font-size="10.4" font-weight="normal" fill="#000" stroke="#000" stroke-width="0.15" textLength="6.6" lengthAdjust="spacingAndGlyphs">D</text><text x="10.8" y="122" font-family="Liberation Sans" font-size="8.6" font-weight="normal" fill="#000" stroke="#000" stroke-width="0.12" textLength="8.6" lengthAdjust="spacingAndGlyphs">oc</text><path d="M4.6,140.4 L14.4,140.4 L18.8,146.8 L14.4,153.2 L4.6,153.2 Z" fill="#fff" stroke="#111" stroke-width="1.2"/><rect x="5.2" y="145.2" width="9.6" height="2.6" fill="#777"/><path d="M5.8,144.4 C7.5,141.6 10,141.4 13.6,144.2 M5.8,152.2 C8,149 10.5,148.8 13.6,151.8" fill="none" stroke="#111" stroke-width="0.9"/><rect x="4.9" y="160.4" width="13.8" height="12.2" fill="#fff" stroke="#111" stroke-width="1.3"/><path d="M6,164.8 C7.2,162.4 8.6,161.4 9.8,161.8 C12,162.6 15,168 18,170" fill="none" stroke="#666" stroke-width="0.8"/><path d="M5.6,170 L9.3,165.8 L12.7,170 L18.2,165" fill="none" stroke="#000" stroke-width="1.3"/><rect x="4.8" y="180.2" width="13.8" height="12.4" fill="#fff" stroke="#222" stroke-width="1.2"/><path d="M5.6,182.2 L17.8,182.2" stroke="#999" stroke-width="1"/><path d="M6.4,184.6 L10.6,184.6 M6.4,187.2 L10.6,187.2 M6.4,189.8 L10.6,189.8" stroke="#000" stroke-width="1"/><path d="M12,184.6 L17.4,184.6 M12,187.2 L17.4,187.2 M12,189.8 L17.4,189.8" stroke="#222" stroke-width="0.9" stroke-dasharray="1.2 1"/><rect x="4.8" y="199.9" width="13.8" height="12.4" fill="#fff" stroke="#222" stroke-width="1.2"/><path d="M7.3,201.8 L7.3,211 M10.1,201.8 L10.1,211 M13,201.8 L13,211 M15.9,201.8 L15.9,211" stroke="#111" stroke-width="1" stroke-dasharray="1.4 1"/><text x="5.2" y="225.6" font-family="Liberation Sans" font-size="6.8" font-weight="normal" fill="#000" stroke="#000" stroke-width="0.25" textLength="14" lengthAdjust="spacingAndGlyphs">Runs</text><path d="M5.2,231.2 L8.6,227.2 L12,231.2 Z" fill="none" stroke="#000" stroke-width="1.1"/><text x="12.2" y="232.8" font-family="Liberation Sans" font-size="8.6" font-weight="normal" fill="#000" stroke="#000" stroke-width="0.2">?</text></svg>
<div class="a" style="left:0;top:515px;width:719px;height:2px;background:#2F7DE1"></div>
<div class="a" style="left:0;top:517px;width:719px;height:1px;background:#fff"></div>
<div class="a" style="left:25px;top:503px;width:11px;height:12px;background:#F6F4EC"></div>
<div class="a" style="left:36.5px;top:503.5px;width:1.5px;height:11.5px;background:#3a3a3a"></div>
<div class="a" style="left:216px;top:503.5px;width:1.2px;height:11.5px;background:#3a3a3a"></div>
<div class="a" style="left:217.5px;top:503px;width:12px;height:12px;background:#F6F4EC"></div>
<div class="a" style="left:229.8px;top:503.5px;width:1.2px;height:11.5px;background:#3a3a3a"></div>
<div class="st" style="left:111.5px;top:503.5px;line-height:12px;font-size:11px;letter-spacing:-0.5px">View 1</div>
<div class="st" style="left:260px;top:503.5px;line-height:12px;font-size:11px;letter-spacing:-0.65px">Arial Narrow</div>
<div class="a" style="left:342px;top:502.5px;width:1.8px;height:12.5px;background:#111"></div>
<div class="a" style="left:343.8px;top:503px;width:16.19999999999999px;height:12px;background:#F4F2E6;border-right:1.3px solid #2a2a2a"></div>
<div class="a" style="left:343.8px;top:503px;width:16.19999999999999px;height:12px;text-align:center;font-size:11px;line-height:12.5px;color:#000">12</div>
<div class="a" style="left:360.5px;top:503px;width:10.0px;height:12px;background:#F4F2E6;border-right:1.3px solid #2a2a2a"></div>
<div class="a" style="left:360.5px;top:503px;width:10.0px;height:12px;text-align:center;font-size:11px;line-height:12.5px;color:#000">b</div>
<div class="a" style="left:371.5px;top:503px;width:9.5px;height:12px;background:#F4F2E6;border-right:1.3px solid #2a2a2a"></div>
<div class="a" style="left:371.5px;top:503px;width:9.5px;height:12px;text-align:center;font-size:11px;line-height:12.5px;color:#000">i</div>
<div class="a" style="left:382px;top:503px;width:10px;height:12px;background:#F4F2E6;border-right:1.3px solid #2a2a2a"></div>
<div class="a" style="left:382px;top:503px;width:10px;height:12px;text-align:center;font-size:11px;line-height:12.5px;color:#000">u</div>
<div class="a" style="left:393px;top:503px;width:10px;height:12px;background:#F4F2E6;border-right:1.3px solid #2a2a2a"></div>
<div class="a" style="left:393px;top:503px;width:10px;height:12px;text-align:center;font-size:11px;line-height:12.5px;color:#000">s</div>
<div class="a" style="left:403.5px;top:503px;width:13px;height:12px;background:#000;border-right:1px solid #888"></div>
<div class="a" style="left:417.5px;top:503px;width:13px;height:12px;background:#000;border-right:1px solid #888"></div>
<div class="a" style="left:431px;top:503px;width:12.5px;height:12px;background:#F4F2E6;border-right:1.3px solid #2a2a2a"></div>
<div class="a" style="left:444px;top:503px;width:13.5px;height:12px;background:#F4F2E6;border-right:1.3px solid #2a2a2a"></div>
<div class="a" style="left:470.5px;top:503px;width:13.5px;height:12px;background:#F4F2E6;border-right:1.3px solid #2a2a2a"></div>
<div class="a" style="left:484.5px;top:503px;width:13.5px;height:12px;background:#F4F2E6;border-right:1.3px solid #2a2a2a"></div>
<div class="a" style="left:498.5px;top:503px;width:13.0px;height:12px;background:#F4F2E6;border-right:1.3px solid #2a2a2a"></div>
<div class="a" style="left:458px;top:503.5px;width:12px;height:11.5px;background:#0000ff"></div>
<svg class="a" style="left:0;top:0" width="719" height="518"><path d="M26.6,504.6 L32,504.6 L34.4,507 L34.4,514.5 L26.6,514.5 Z" fill="#fff" stroke="#000" stroke-width="1.1"/><path d="M30.5,506.5 L33,509.6 L31.4,509.6 L31.4,513.6 L29.6,513.6 L29.6,509.6 L28,509.6 Z" fill="#000"/><path d="M218.8,504.6 L224.2,504.6 L226.6,507 L226.6,514.5 L218.8,514.5 Z" fill="#fff" stroke="#000" stroke-width="1.1"/><path d="M222.7,513.6 L225.2,510.4 L223.6,510.4 L223.6,506.4 L221.8,506.4 L221.8,510.4 L220.2,510.4 Z" fill="#000"/><path d="M432,504.5 L441.5,504.5 L441.5,510 M432,504.5 L432,507" fill="none" stroke="#000" stroke-width="1"/><ellipse cx="437.5" cy="510" rx="4" ry="3" fill="none" stroke="#000" stroke-width="1.1"/><path d="M433,513.5 L436,510" stroke="#000" stroke-width="1"/><path d="M450.8,505 L450.8,514 M445.5,509.5 L456,509.5" stroke="#000" stroke-width="1" stroke-dasharray="1.5 1.2"/><rect x="449" y="507.2" width="3.6" height="4.6" rx="1.2" fill="#fff" stroke="#000" stroke-width="1"/><path d="M472.5,507 L480,507 M472.5,511.6 L480,511.6" stroke="#000" stroke-width="1.2"/><path d="M478.5,504.8 L481.8,507 L478.5,509.2 Z M479.5,509.4 L483,511.6 L479.5,513.8 Z" fill="#000"/><text x="485.4" y="511.8" font-family="Liberation Sans" font-size="8.6" fill="#000">±0</text><path d="M486,513.8 L496.8,513.8" stroke="#000" stroke-width="0.8"/><rect x="499.6" y="504.4" width="6.6" height="5.6" fill="#e00000" stroke="#600" stroke-width="0.6"/><rect x="502.6" y="507.2" width="7.6" height="6.4" fill="#fff" stroke="#000" stroke-width="1"/><path d="M504,509.4 L509,509.4 M504,511.4 L509,511.4" stroke="#555" stroke-width="0.8"/></svg>
</body></html>
